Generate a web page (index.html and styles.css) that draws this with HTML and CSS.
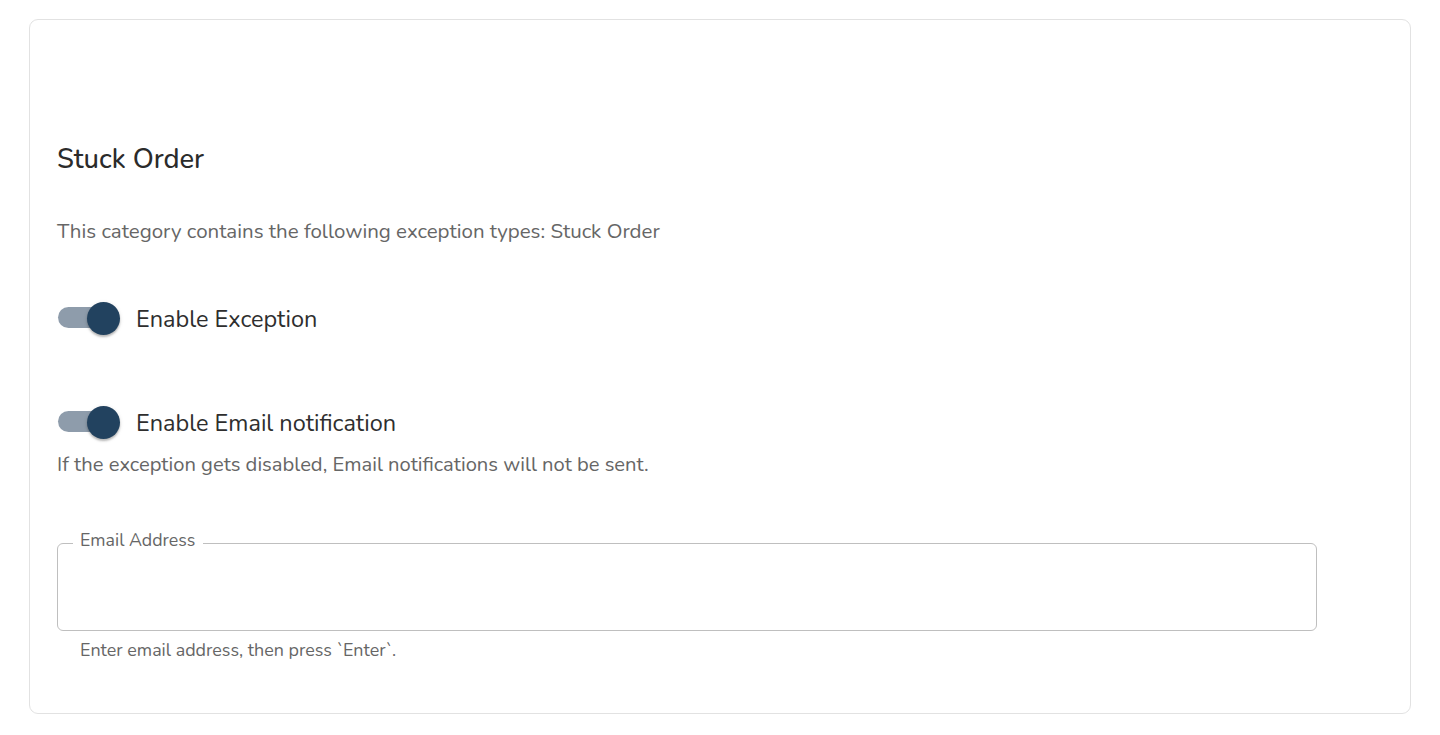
FILE: index.html
```html
<!DOCTYPE html>
<html lang="en">
<head>
<meta charset="utf-8">
<title>Stuck Order</title>
<link rel="stylesheet" href="styles.css">
</head>
<body>
<main class="card">
  <h2 class="title">Stuck Order</h2>
  <p class="desc">This category contains the following exception types: Stuck Order</p>
  <label class="switch-row row-first">
    <span class="switch"><span class="track"></span><span class="thumb"></span></span>
    <span class="switch-label">Enable Exception</span>
  </label>
  <label class="switch-row row-second">
    <span class="switch"><span class="track"></span><span class="thumb"></span></span>
    <span class="switch-label">Enable Email notification</span>
  </label>
  <p class="note">If the exception gets disabled, Email notifications will not be sent.</p>
  <div class="field">
    <span class="field-label">Email Address</span>
    <input class="field-input" type="text" aria-label="Email Address">
  </div>
  <p class="helper">Enter email address, then press `Enter`.</p>
</main>
</body>
</html>
```
FILE: styles.css
```css
html, body {
  margin: 0;
  padding: 0;
  background: #ffffff;
}
body {
  font-family: "Nunito", "Noto Sans", "Open Sans", sans-serif;
  color: #2e2e2e;
}
.card {
  margin: 19px 29px 0 29px;
  height: 695px;
  box-sizing: border-box;
  border: 1px solid #e2e2e2;
  border-radius: 9px;
  padding: 0 27px;
}
.title {
  margin: 123px 0 0 0;
  font-size: 27.3px;
  line-height: 32px;
  font-weight: 500;
  color: #2b2b2b;
}
.desc {
  margin: 44px 0 0 0;
  font-size: 20.5px;
  line-height: 24px;
  color: #666666;
}
.switch-row {
  display: flex;
  align-items: center;
  gap: 15px;
  height: 34px;
}
.row-first { margin-top: 58px; }
.row-second { margin-top: 70px; }
.switch {
  position: relative;
  width: 64px;
  height: 34px;
  flex: none;
}
.track {
  position: absolute;
  left: 1px;
  top: 6px;
  width: 58px;
  height: 21px;
  border-radius: 11px;
  background: #8e9cab;
}
.thumb {
  position: absolute;
  left: 30px;
  top: 1px;
  width: 33px;
  height: 33px;
  border-radius: 50%;
  background: #22425f;
  box-shadow: 0 2px 2px rgba(0,0,0,0.22), 0 1px 4px rgba(0,0,0,0.12);
}
.switch-label {
  font-size: 23.5px;
  line-height: 30px;
  padding-top: 1px;
  color: #2e2e2e;
}
.note {
  margin: 14px 0 0 0;
  font-size: 20.2px;
  line-height: 24px;
  color: #666666;
}
.field {
  position: relative;
  margin-top: 66px;
  width: 95%;
  height: 88px;
  box-sizing: border-box;
  border: 1.5px solid #bfbfbf;
  border-radius: 6px;
}
.field-label {
  position: absolute;
  left: 15px;
  top: -15px;
  padding: 0 8px 0 7px;
  background: #ffffff;
  font-size: 17.8px;
  line-height: 22px;
  color: #666666;
}
.field-input {
  display: block;
  width: 100%;
  height: 100%;
  box-sizing: border-box;
  border: 0;
  outline: 0;
  background: transparent;
  padding: 0 22px;
  font: inherit;
  font-size: 20px;
}
.helper {
  margin: 9px 0 0 23px;
  font-size: 17.9px;
  line-height: 20px;
  color: #666666;
}
```
